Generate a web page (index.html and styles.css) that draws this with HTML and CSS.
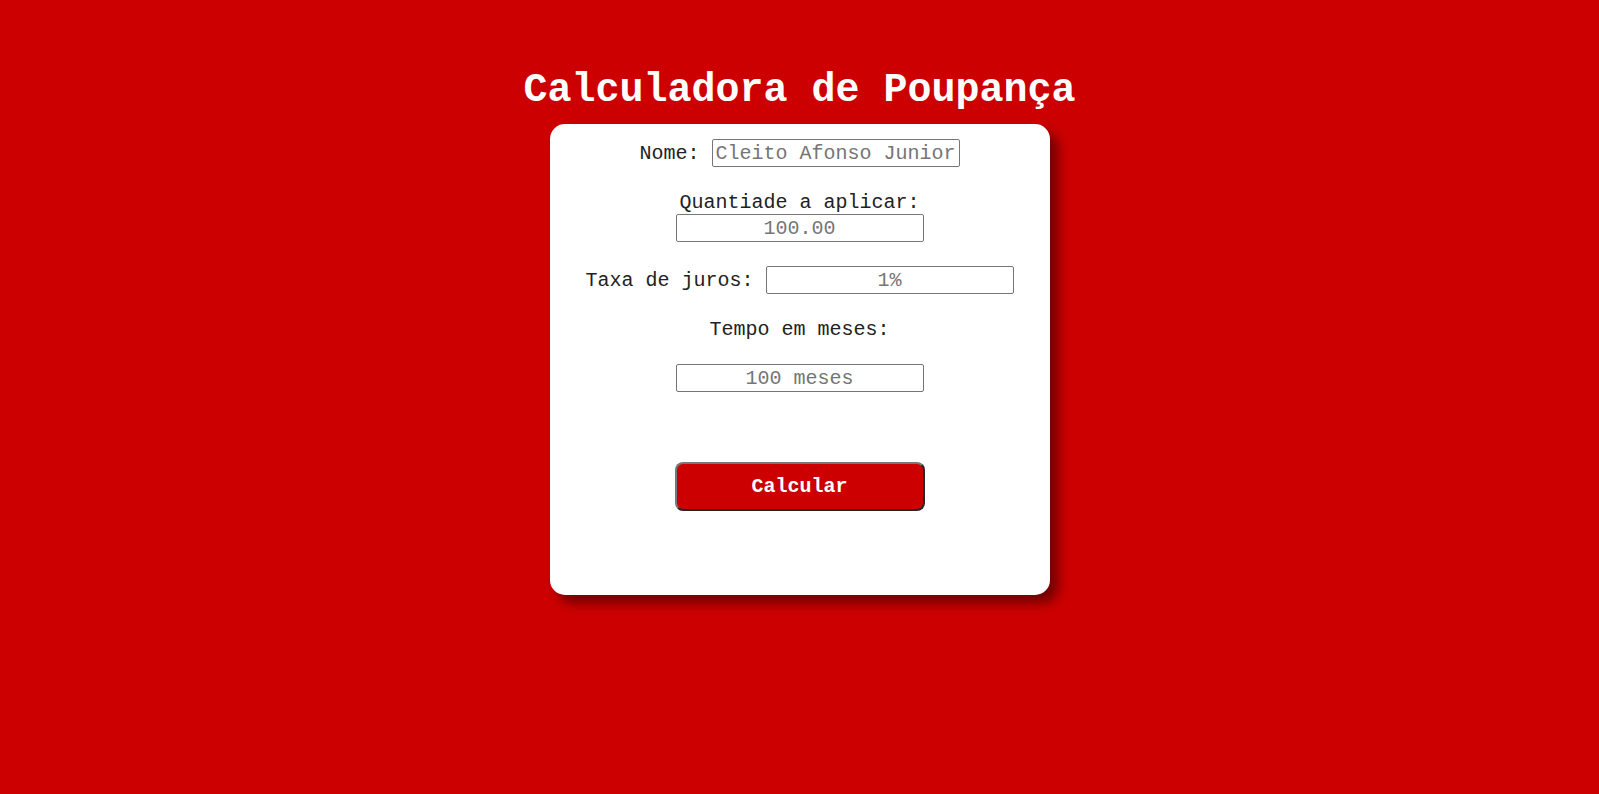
FILE: index.html
```html
<!DOCTYPE html>
<html lang="pt-BR">
<head>
<meta charset="utf-8">
<title>Calculadora de Poupança</title>
<link rel="stylesheet" href="styles.css">
</head>
<body>
<main class="page">
  <h1 class="title">Calculadora de Poupança</h1>
  <form class="card">
    <div class="row">
      <label class="label" for="nome">Nome:</label> <input class="field" id="nome" type="text" placeholder="Cleito Afonso Junior">
    </div>
    <div class="row stack">
      <label class="label" for="quantia">Quantiade a aplicar:</label>
      <input class="field center" id="quantia" type="text" placeholder="100.00">
    </div>
    <div class="row">
      <label class="label" for="taxa">Taxa de juros:</label> <input class="field center" id="taxa" type="text" placeholder="1%">
    </div>
    <div class="row">
      <label class="label" for="tempo">Tempo em meses:</label>
    </div>
    <div class="row tight">
      <input class="field center" id="tempo" type="text" placeholder="100 meses">
    </div>
    <div class="actions">
      <button class="btn" type="button">Calcular</button>
    </div>
  </form>
</main>
</body>
</html>
```

FILE: styles.css
```css
html, body {
  margin: 0;
  padding: 0;
}

body {
  background: #cc0000;
  font-family: "Courier New", "Liberation Mono", monospace;
  min-height: 794px;
}

.page {
  padding-top: 68px;
}

.title {
  margin: 0 0 11px;
  font-size: 40px;
  line-height: 45px;
  font-weight: bold;
  color: #ffffff;
  text-align: center;
}

.card {
  width: 500px;
  margin: 0 auto;
  box-sizing: border-box;
  background: #ffffff;
  border-radius: 15px;
  padding: 15px 0 84px;
  box-shadow: 8px 8px 12px rgba(0, 0, 0, 0.45);
  text-align: center;
  font-size: 20px;
  color: #222222;
}

.row {
  display: flex;
  justify-content: center;
  align-items: center;
  gap: 12px;
  margin-bottom: 24px;
}

.row.stack {
  flex-direction: column;
  gap: 0;
}

.row.tight {
  margin-top: -1px;
}

.label {
  font-size: 20px;
  line-height: 23px;
}

.field {
  width: 248px;
  height: 28px;
  box-sizing: border-box;
  border: 1px solid #767676;
  border-radius: 2px;
  padding: 0 3px;
  font-family: "Courier New", "Liberation Mono", monospace;
  font-size: 20px;
  color: #222222;
  background: #ffffff;
}

.field::placeholder {
  color: #757575;
}

.center {
  text-align: center;
}

.actions {
  display: flex;
  justify-content: center;
  padding-top: 46px;
}

.btn {
  width: 250px;
  height: 49px;
  box-sizing: border-box;
  background: #cc0000;
  color: #ffffff;
  font-family: "Courier New", "Liberation Mono", monospace;
  font-size: 20px;
  font-weight: bold;
  border: 2px solid;
  border-color: #787878 #262626 #262626 #787878;
  border-radius: 8px;
  cursor: pointer;
}
```
